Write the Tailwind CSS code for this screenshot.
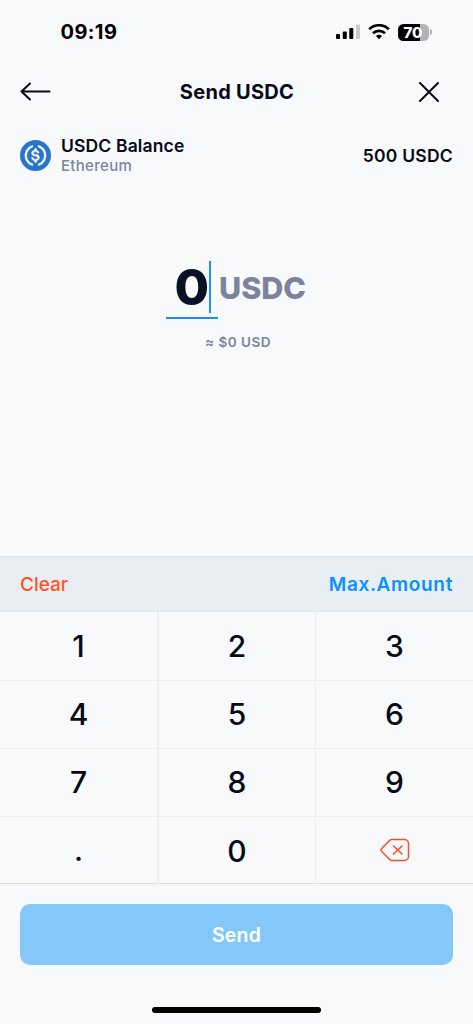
<!DOCTYPE html>
<html lang="en">
<head>
<meta charset="utf-8">
<meta name="viewport" content="width=device-width, initial-scale=1">
<title>Send USDC</title>
<script src="https://cdn.jsdelivr.net/npm/@tailwindcss/browser@4"></script>
</head>
<body class="bg-[#f7f9fb] font-['Inter',sans-serif] text-[#060a18]">
<main class="flex h-[1024px] w-[473px] flex-col overflow-hidden whitespace-nowrap">
  <!-- Status bar -->
  <div class="flex h-16 shrink-0 items-center justify-between pr-[41px] pl-[60.500px] text-black">
    <span class="text-[20px] leading-6 font-bold tracking-[0.4px]">09:19</span>
    <div class="flex items-center">
      <svg class="h-4 w-6" viewBox="0 0 24 16"><g><rect y="10" width="4" height="5" rx="1"/><rect x="6.800" y="7.500" width="4" height="7.500" rx="1"/><rect x="13.300" y="4" width="4" height="11" rx="1"/><rect x="20" y="0.500" width="4" height="14.500" rx="1" fill="#c9cacc"/></g></svg>
      <svg class="ml-2 h-4 w-[22px]" viewBox="0 0 22 16" fill="none" stroke="#000" stroke-width="2.700"><path d="M1.200 5.300C6.600-.1 15.400-.1 20.800 5.300M5 9.200c3.400-3.200 8.600-3.200 12 0"/><path d="M7.900 12c1.700-1.600 4.500-1.600 6.200 0L11 15.200Z" fill="#000" stroke="none"/></svg>
      <div class="ml-2 flex h-[17px] w-[31px] items-center justify-center rounded-[5.500px] bg-[linear-gradient(90deg,#000_71%,#b3b3b5_71%)] pr-px text-[15px] leading-[17px] font-extrabold text-white">70</div>
      <div class="ml-px h-[6px] w-[2px] rounded-r-full bg-[#b3b3b5]"></div>
    </div>
  </div>
  <!-- Header -->
  <header class="flex h-14 shrink-0 items-center justify-between pr-[34px] pl-5">
    <svg class="h-5 w-[31px]" viewBox="0 0 31 20" fill="none" stroke="#060a18" stroke-width="2" stroke-linecap="round" stroke-linejoin="round"><path d="M29.500 9.500H1.500M10 1.500l-8.500 8 8.500 8"/></svg>
    <h1 class="pl-[4px] text-[20px] leading-6 font-bold tracking-[0.28px]">Send USDC</h1>
    <svg class="h-5 w-5" viewBox="0 0 20 20" fill="none" stroke="#060a18" stroke-width="2" stroke-linecap="round"><path d="M1 1l18 18M19 1L1 19"/></svg>
  </header>
  <!-- Balance -->
  <section class="flex h-[70px] shrink-0 items-center px-5">
    <svg class="h-[31px] w-[31px]" viewBox="0 0 32 32"><circle cx="16" cy="16" r="16" fill="#2775ca"/><g stroke="#fff" stroke-width=".5"><path fill="#fff" d="M20.022 18.124c0-2.124-1.280-2.852-3.840-3.156-1.828-.243-2.193-.728-2.193-1.578 0-.850.610-1.396 1.828-1.396 1.097 0 1.707.364 2.011 1.275a.458.458 0 00.427.303h.975a.416.416 0 00.427-.425v-.060a3.040 3.040 0 00-2.743-2.489V9.142c0-.243-.183-.425-.487-.486h-.915c-.243 0-.426.182-.487.486v1.396c-1.829.242-2.986 1.456-2.986 2.974 0 2.002 1.218 2.791 3.778 3.095 1.707.303 2.255.668 2.255 1.639 0 .970-.853 1.638-2.011 1.638-1.585 0-2.133-.667-2.316-1.578-.060-.242-.244-.364-.427-.364h-1.036a.416.416 0 00-.426.425v.060c.243 1.518 1.219 2.610 3.230 2.914v1.457c0 .242.183.425.487.485h.915c.243 0 .426-.182.487-.485V21.340c1.829-.303 3.047-1.578 3.047-3.217z"/><path fill="#fff" d="M12.892 24.497c-4.754-1.700-7.192-6.980-5.424-11.653.914-2.550 2.925-4.491 5.424-5.402.244-.121.365-.303.365-.607v-.850c0-.242-.121-.424-.365-.485-.061 0-.183 0-.244.060a10.895 10.895 0 00-7.130 13.717c1.096 3.400 3.717 6.010 7.130 7.102.244.121.488 0 .548-.243.061-.060.061-.122.061-.243v-.850c0-.182-.182-.424-.365-.546zm6.460-18.936c-.244-.122-.488 0-.548.242-.061.061-.061.122-.061.243v.850c0 .243.182.485.365.607 4.754 1.700 7.192 6.980 5.424 11.653-.914 2.550-2.925 4.491-5.424 5.402-.244.121-.365.303-.365.607v.850c0 .242.121.424.365.485.061 0 .183 0 .244-.060a10.895 10.895 0 007.130-13.717c-1.096-3.460-3.778-6.070-7.130-7.162z"/></g></svg>
    <div class="ml-[10px] flex flex-col pt-px">
      <span class="text-[17.500px] leading-[20px] font-semibold tracking-[0.15px]">USDC Balance</span>
      <span class="text-[15px] leading-[19px] font-medium tracking-[0.3px] text-[#7c85a0]">Ethereum</span>
    </div>
    <span class="ml-auto text-[17.500px] leading-[21px] font-semibold tracking-[0.25px]">500 USDC</span>
  </section>
  <!-- Amount -->
  <section class="flex grow flex-col items-center pt-[71px]">
    <div class="flex h-[58px] w-[141px]">
      <div class="flex h-[58px] w-[52px] shrink-0 justify-end border-b-2 border-[#1a8cff] pr-[7px]">
        <span class="text-[50px] leading-[53px] font-extrabold text-[#081126]">0</span>
        <div class="h-[52px] w-[2px] shrink-0 bg-[#1a8cff]"></div>
      </div>
      <span class="pl-px text-[30.500px] leading-[54px] font-extrabold text-[#7c839b]">USDC</span>
    </div>
    <span class="mt-[14px] pl-[3px] text-[13.500px] leading-[18px] font-semibold tracking-[0.5px] text-[#7c85a0]">≈ $0 USD</span>
  </section>
  <!-- Quick actions -->
  <div class="flex h-[56px] shrink-0 items-center justify-between border-y border-t-[#dbe0e4] border-b-[#e4e9ed] bg-[#e9eef2] px-5 pt-[2px]">
    <button class="text-[19px] leading-6 font-medium text-[#ff5326]">Clear</button>
    <button class="text-[19px] leading-6 font-semibold tracking-[0.65px] text-[#0b90fe]">Max.Amount</button>
  </div>
  <!-- Keypad -->
  <div class="grid h-[272px] shrink-0 grid-cols-[159px_157px_157px] grid-rows-[69px_68px_68px_67px] border-b border-[#dcdfe2] text-[30px] font-medium *:flex *:items-center *:justify-center *:border-[#eceef1]">
    <button class="border-r-2 border-b">1</button><button class="border-r border-b">2</button><button class="border-b">3</button>
    <button class="border-r-2 border-b">4</button><button class="border-r border-b">5</button><button class="border-b">6</button>
    <button class="border-r-2 border-b">7</button><button class="border-r border-b">8</button><button class="border-b">9</button>
    <button class="border-r-2">.</button><button class="border-r pt-px">0</button>
    <button class="pb-[2px]"><svg class="h-6 w-[30px]" viewBox="0 0 30 24" fill="none" stroke="#fa4d22" stroke-width="1.500" stroke-linecap="round" stroke-linejoin="round"><path d="M12 1.500h12.500a4 4 0 0 1 4 4v13a4 4 0 0 1-4 4H12c-1 0-1.700-.4-2.400-1L1.500 13.200a1.600 1.600 0 0 1 0-2.400l8.100-8.300c.7-.700 1.400-1 2.400-1ZM13.500 8l8.500 8M22 8l-8.500 8"/></svg></button>
  </div>
  <!-- Submit -->
  <footer class="flex h-[140px] shrink-0 flex-col items-center px-5 pt-5">
    <button class="h-[61px] w-full rounded-[10px] bg-[#84c7f9] pt-[2px] text-[19.500px] font-semibold tracking-[0.2px] text-white">Send</button>
    <div class="mt-[42px] h-[6px] w-[169px] rounded-full bg-black"></div>
  </footer>
</main>
</body>
</html>
